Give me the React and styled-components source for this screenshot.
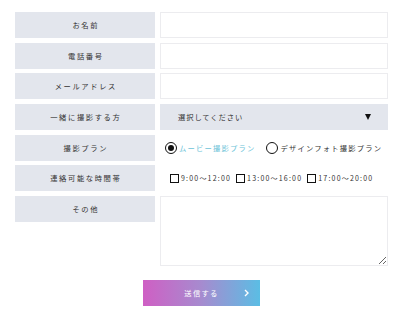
import styled, { createGlobalStyle } from 'styled-components'

const Global = createGlobalStyle`
  body {
    margin: 0;
    background: #fff;
    font-family: "Noto Sans CJK JP", "Noto Sans", sans-serif;
    color: #333;
  }
`

const Form = styled.form`
  padding: 12px 12px 10px 15px;
`

const Grid = styled.div`
  display: grid;
  grid-template-columns: 140px 1fr;
  column-gap: 5px;
  row-gap: 4.67px;
`

const Label = styled.div`
  height: 26px;
  background: #e3e6ed;
  display: flex;
  align-items: center;
  justify-content: center;
  font-size: 7.3px;
  letter-spacing: 1.6px;
  padding-left: 1.6px;
  color: #333;
`

const Input = styled.input`
  box-sizing: border-box;
  height: 26px;
  width: 100%;
  border: 1px solid #ececef;
  background: #fff;
  margin: 0;
  outline: none;
`

const Select = styled.div`
  height: 26px;
  background: #e3e6ed;
  display: flex;
  align-items: center;
  justify-content: space-between;
  padding: 0 17px 0 18px;
  font-size: 7.3px;
  letter-spacing: 0.9px;
  color: #333;
`

const Arrow = styled.span`
  width: 0;
  height: 0;
  border-left: 3.5px solid transparent;
  border-right: 3.5px solid transparent;
  border-top: 6px solid #111;
`

const Options = styled.div`
  height: 26px;
  display: flex;
  align-items: center;
  white-space: nowrap;
  padding-left: ${p => p.$pad}px;
  gap: ${p => p.$gap}px;
`

const Option = styled.label`
  display: flex;
  align-items: center;
  flex-shrink: 0;
  font-size: ${p => p.$small ? 7 : 7.3}px;
  letter-spacing: ${p => p.$small ? 1.2 : 1.2}px;
  color: ${p => p.$active ? '#6cc3d8' : '#333'};
`

const Radio = styled.span`
  box-sizing: border-box;
  width: 12px;
  height: 12px;
  border-radius: 50%;
  border: 1.5px solid #111;
  margin-right: 2px;
  display: flex;
  align-items: center;
  justify-content: center;
  &::after {
    content: '';
    display: ${p => p.$checked ? 'block' : 'none'};
    width: 6px;
    height: 6px;
    border-radius: 50%;
    background: #111;
  }
`

const Check = styled.span`
  box-sizing: border-box;
  width: 9px;
  height: 9px;
  border: 1px solid #111;
  margin-right: 2px;
`

const TextArea = styled.textarea`
  box-sizing: border-box;
  height: 70px;
  width: 100%;
  border: 1px solid #ececef;
  margin: 0;
  resize: vertical;
  outline: none;
`

const Footer = styled.div`
  display: flex;
  justify-content: center;
  padding-top: 14px;
`

const Submit = styled.button`
  position: relative;
  width: 117px;
  height: 26px;
  border: none;
  background: linear-gradient(90deg, #cf5fc4 0%, #a68bcf 50%, #5bbde4 100%);
  color: #fff;
  font-family: inherit;
  font-size: 7.3px;
  letter-spacing: 1.3px;
  padding: 0;
  cursor: pointer;
  svg {
    position: absolute;
    right: 11px;
    top: 9px;
  }
`

const times = ['9:00～12:00', '13:00～16:00', '17:00～20:00']

export default function App() {
  return (
    <>
      <Global />
      <Form onSubmit={e => e.preventDefault()}>
        <Grid>
          <Label>お名前</Label>
          <Input type="text" />
          <Label>電話番号</Label>
          <Input type="tel" />
          <Label>メールアドレス</Label>
          <Input type="email" />
          <Label>一緒に撮影する方</Label>
          <Select>
            <span>選択してください</span>
            <Arrow />
          </Select>
          <Label>撮影プラン</Label>
          <Options $pad={5} $gap={11}>
            <Option $active><Radio $checked />ムービー撮影プラン</Option>
            <Option><Radio />デザインフォト撮影プラン</Option>
          </Options>
          <Label>連絡可能な時間帯</Label>
          <Options $pad={10} $gap={5}>
            {times.map(t => (
              <Option key={t} $small><Check />{t}</Option>
            ))}
          </Options>
          <Label>その他</Label>
          <TextArea />
        </Grid>
        <Footer>
          <Submit type="submit">
            送信する
            <svg width="5" height="8" viewBox="0 0 5 8">
              <path d="M1 1l3 3-3 3" fill="none" stroke="#fff" strokeWidth="1.4" />
            </svg>
          </Submit>
        </Footer>
      </Form>
    </>
  )
}
